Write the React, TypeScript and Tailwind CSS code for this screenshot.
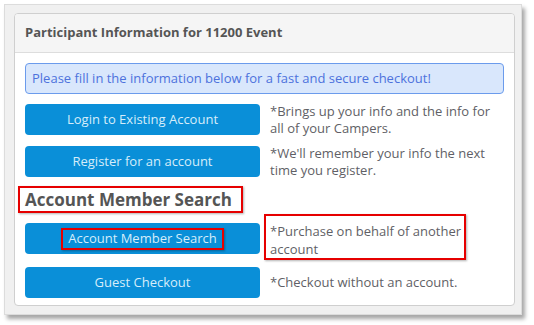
import React from "react";

const rows = [
  {
    label: "Login to Existing Account",
    note: "*Brings up your info and the info for all of your Campers.",
  },
  {
    label: "Register for an account",
    note: "*We'll remember your info the next time you register.",
  },
];

function ActionButton({ children }: { children: React.ReactNode }) {
  return (
    <button className="w-[235px] h-[31px] shrink-0 rounded-[4px] bg-[#0a8fd8] text-[13px] text-[#d6edfa] flex items-center justify-center">
      {children}
    </button>
  );
}

export default function App() {
  return (
    <div
      className="w-[534px] h-[325px] bg-white pt-[4px] pl-[4px]"
      style={{ fontFamily: '"Open Sans", "Noto Sans", sans-serif' }}
    >
      <div className="w-[518px] h-[311px] bg-[#f0f0f0] border border-[#dcdcdc] shadow-[3px_4px_4px_rgba(0,0,0,0.35)] pt-[8px] pl-[9px]">
        <div className="w-[501px] h-[293px] bg-white border border-[#cfcfcf] rounded-[4px] overflow-hidden">
          {/* Header */}
          <div className="h-[39px] bg-[#f5f5f5] border-b border-[#dddddd] px-[10px] flex items-center">
            <h3 className="text-[13px] font-bold text-[#555]">
              Participant Information for 11200 Event
            </h3>
          </div>

          <div className="px-[10px] pt-[10px]">
            {/* Alert */}
            <div className="h-[31px] rounded-[4px] border border-[#6b9bec] bg-[#d9e7fc] px-[6px] flex items-center text-[13px] text-[#4d72dc]">
              Please fill in the information below for a fast and secure checkout!
            </div>

            {rows.map((r) => (
              <div key={r.label} className="flex items-start gap-[10px] mt-[10px] h-[32px]">
                <ActionButton>{r.label}</ActionButton>
                <p className="text-[13px] leading-[17px] text-[#5f5f66] -mt-[1px] w-[224px]">{r.note}</p>
              </div>
            ))}

            {/* Heading with annotation box */}
            <div className="mt-[8px] -ml-[7px] w-[225px] h-[27px] border-2 border-[#e60000] shadow-[1px_1px_2px_rgba(0,0,0,0.3)] pl-[5px] flex items-center">
              <h2 className="text-[17px] font-bold text-[#555] whitespace-nowrap">Account Member Search</h2>
            </div>

            <div className="flex items-start gap-[10px] mt-[10px] h-[32px]">
              <ActionButton>
                <span className="border-2 border-[#e60000] px-[5px] h-[22px] flex items-center shadow-[1px_1px_2px_rgba(0,0,0,0.3)]">
                  Account Member Search
                </span>
              </ActionButton>
              <div className="relative">
                <p className="text-[13px] leading-[18px] text-[#5f5f66] -mt-[1px] w-[196px]">
                  *Purchase on behalf of another account
                </p>
                <div className="absolute -left-[6px] -top-[9px] w-[202px] h-[46px] border-2 border-[#e60000] shadow-[1px_1px_2px_rgba(0,0,0,0.3)]" />
              </div>
            </div>

            <div className="flex items-center gap-[10px] mt-[12px]">
              <ActionButton>Guest Checkout</ActionButton>
              <p className="text-[13px] text-[#5f5f66]">*Checkout without an account.</p>
            </div>
          </div>
        </div>
      </div>
    </div>
  );
}
